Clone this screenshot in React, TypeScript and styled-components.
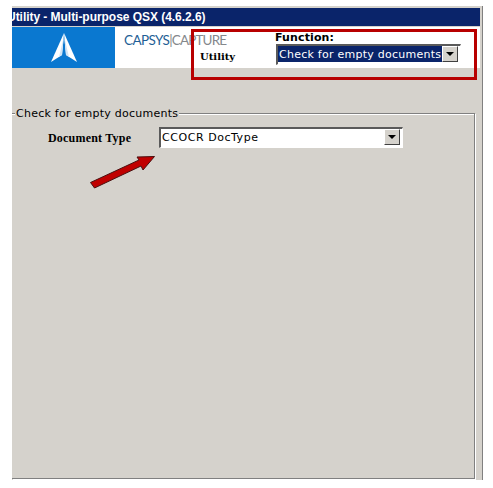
import React from "react";
import styled, { createGlobalStyle } from "styled-components";

const Global = createGlobalStyle`
  html, body { margin: 0; padding: 0; background: #fff; }
  body { width: 493px; height: 488px; overflow: hidden; }
`;

const Page = styled.div`
  position: relative;
  width: 493px;
  height: 488px;
  padding: 6px 0 0 12px;
  box-sizing: border-box;
`;

const Window = styled.div`
  width: 471px;
  height: 474px;
  box-sizing: border-box;
  display: flex;
  flex-direction: column;
  background: #d5d2cc;
  border-right: 1px solid #808080;
  padding: 2px 2px 0 0;
`;

const TitleBar = styled.div`
  height: 18px;
  flex: none;
  background: #0a246a;
  color: #fff;
  font: bold 12px/18px "Liberation Sans", sans-serif;
  letter-spacing: -0.04px;
  white-space: nowrap;
  overflow: hidden;
  text-indent: -5px;
`;

const Header = styled.div`
  height: 41px;
  margin-top: 1px;
  flex: none;
  display: flex;
  background: #fff;
`;

const LogoTile = styled.div`
  width: 103px;
  flex: none;
  background: #0a78d0;
  display: flex;
  align-items: center;
  justify-content: center;
`;

const Brand = styled.div`
  flex: none;
  width: 160px;
  padding: 6px 0 0 9px;
  box-sizing: border-box;
`;

const BrandName = styled.div`
  font: 13.5px/14px "Lato", sans-serif;
  white-space: nowrap;
`;

const BrandBlue = styled.span`
  color: #1f5f96;
  letter-spacing: -0.6px;
`;

const BrandGrey = styled.span`
  color: #85888c;
  letter-spacing: -0.85px;
`;

const UtilityLabel = styled.div`
  margin: 4px 0 0 76px;
  font: bold 10px/12px "DejaVu Serif", serif;
  color: #000;
`;

const FunctionArea = styled.div`
  padding: 5px 0 0 0;
  margin-left: 1px;
`;

const FunctionLabel = styled.div`
  font: bold 11px/12px "DejaVu Sans", sans-serif;
  letter-spacing: 0.12px;
  color: #000;
  margin-left: -1px;
`;

const Combo = styled.div<{ $width: number }>`
  width: ${(p) => p.$width}px;
  height: 21px;
  box-sizing: border-box;
  display: flex;
  align-items: stretch;
  background: #fff;
  border-style: solid;
  border-width: 2px 1px 1px 2px;
  border-color: #5a5a5a #fff #fff #5a5a5a;
  padding: 0 2px 2px 0;
`;

const ComboText = styled.div<{ $selected?: boolean }>`
  flex: 1;
  min-width: 0;
  font: 11px/15px "DejaVu Sans", sans-serif;
  letter-spacing: ${(p) => (p.$selected ? "0.25px" : "0.55px")};
  white-space: nowrap;
  overflow: hidden;
  padding: 1px 0 0 1px;
  color: ${(p) => (p.$selected ? "#fff" : "#000")};
  background: ${(p) => (p.$selected ? "#0a246a" : "#fff")};
`;

const ComboButton = styled.div`
  width: 16px;
  flex: none;
  box-sizing: border-box;
  background: #d5d2cc;
  border-style: solid;
  border-width: 1px;
  border-color: #fff #404040 #404040 #fff;
  display: flex;
  align-items: center;
  justify-content: center;
`;

const Caret = styled.span`
  width: 0;
  height: 0;
  border-style: solid;
  border-width: 4px 4px 0 4px;
  border-color: #000 transparent transparent transparent;
`;

const Body = styled.div`
  flex: 1;
  min-height: 0;
  padding: 39px 5px 1px 0;
  display: flex;
`;

const Group = styled.fieldset`
  flex: 1;
  margin: 0;
  min-width: 0;
  box-sizing: border-box;
  padding: 7px 0 0 0;
  border: 1px solid #808080;
  border-left: none;
  box-shadow: 1px 1px 0 #fff, inset 0 1px 0 #fff;
`;

const GroupTitle = styled.legend`
  margin-left: 3px;
  padding: 0 1px 0 1px;
  background: #d5d2cc;
  font: 11px/13px "DejaVu Sans", sans-serif;
  letter-spacing: 0.25px;
  color: #000;
`;

const FormRow = styled.div`
  display: flex;
  align-items: center;
  padding-left: 36px;
`;

const FieldLabel = styled.label`
  width: 111px;
  flex: none;
  font: bold 12px/14px "Liberation Serif", serif;
  letter-spacing: 0.2px;
  color: #000;
`;

const RedFrame = styled.div`
  position: absolute;
  left: 191px;
  top: 29px;
  width: 286px;
  height: 51px;
  box-sizing: border-box;
  border: 3px solid #b80000;
  pointer-events: none;
`;

const ArrowMark = styled.svg`
  position: absolute;
  left: 85px;
  top: 150px;
  width: 75px;
  height: 45px;
`;

export default function App() {
  return (
    <Page>
      <Global />
      <Window>
        <TitleBar>Utility - Multi-purpose QSX (4.6.2.6)</TitleBar>
        <Header>
          <LogoTile>
            <svg width="28" height="31" viewBox="0 0 28 31">
              <polygon points="14,1 1,30 12,23 13,13" fill="#fff" />
              <polygon points="14,1 27,30 16,23 15,13" fill="#fff" />
              <polygon points="14,1 13,13 12,23 9,25 13.5,6" fill="#cfe4f6" />
              <polygon points="14,1 15,13 16,23 19,25 14.5,6" fill="#cfe4f6" />
            </svg>
          </LogoTile>
          <Brand>
            <BrandName>
              <BrandBlue>CAPSYS</BrandBlue>
              <BrandGrey>|CAPTURE</BrandGrey>
            </BrandName>
            <UtilityLabel>Utility</UtilityLabel>
          </Brand>
          <FunctionArea>
            <FunctionLabel>Function:</FunctionLabel>
            <Combo $width={185}>
              <ComboText $selected>Check for empty documents</ComboText>
              <ComboButton>
                <Caret />
              </ComboButton>
            </Combo>
          </FunctionArea>
        </Header>
        <Body>
          <Group>
            <GroupTitle>Check for empty documents</GroupTitle>
            <FormRow>
              <FieldLabel>Document Type</FieldLabel>
              <Combo $width={244}>
                <ComboText>CCOCR DocType</ComboText>
                <ComboButton>
                  <Caret />
                </ComboButton>
              </Combo>
            </FormRow>
          </Group>
        </Body>
      </Window>
      <RedFrame />
      <ArrowMark viewBox="0 0 75 45">
        <polygon
          points="5.5,32.5 54,10 52,7 69.5,6.5 58,20 56,16 9.5,38"
          fill="#c00000"
          stroke="#4a1010"
          strokeWidth="1"
        />
      </ArrowMark>
    </Page>
  );
}
